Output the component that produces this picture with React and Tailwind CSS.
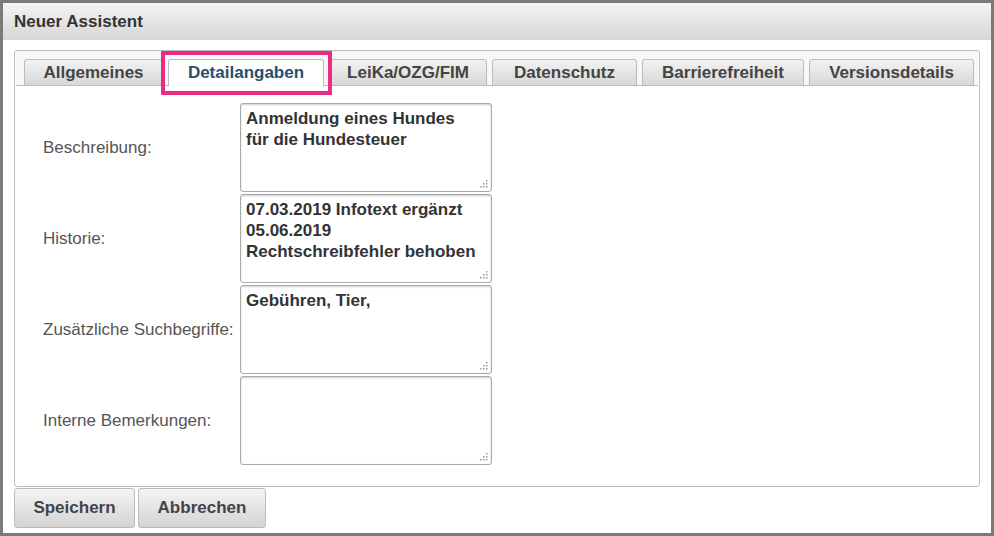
export default function App() {
  const tabs = [
    ["Allgemeines", 139],
    ["Detailangaben", 156],
    ["LeiKa/OZG/FIM", 158],
    ["Datenschutz", 145],
    ["Barrierefreiheit", 162],
    ["Versionsdetails", 165],
  ];
  const rows = [
    ["Beschreibung:", "Anmeldung eines Hundes\nfür die Hundesteuer"],
    ["Historie:", "07.03.2019 Infotext ergänzt\n05.06.2019\nRechtschreibfehler behoben"],
    ["Zusätzliche Suchbegriffe:", "Gebühren, Tier,"],
    ["Interne Bemerkungen:", ""],
  ];
  const grip = (
    <svg width="8" height="8" className="absolute right-[3px] bottom-[3px]" viewBox="0 0 8 8">
      {[[6,0],[6,3],[3,3],[6,6],[3,6],[0,6]].map(([x,y],i)=>(<rect key={i} x={x} y={y} width="1.5" height="1.5" fill="#999"/>))}
    </svg>
  );
  return (
    <div className="w-[994px] h-[536px] bg-[#7a7a7a] p-[3px]" style={{fontFamily:'"Liberation Sans", Arial, sans-serif'}}>
      <div className="w-full h-full bg-white flex flex-col">
        <div className="h-[37px] shrink-0 bg-gradient-to-b from-[#f4f4f4] to-[#d6d6d6] flex items-center px-[11px] text-[17px] font-bold text-[#333]">Neuer Assistent</div>
        <div className="mx-[11px] mt-[10px] h-[437px] border border-[#bbb] rounded-[3px] flex flex-col relative">
          <div className="h-[35px] bg-[#f7f7f7] pt-[8px] pl-[8px] flex gap-[5px] border-b border-[#bbb] mx-[1px]">
            {tabs.map(([t,w],i)=>(
              <div key={t} style={{width:w}} className={`h-[27px] rounded-t-[3px] border border-[#bbb] flex items-center justify-center text-[17px] font-bold ${i===1?"bg-white text-[#2a4f6e] border-b-white h-[28px]":"bg-gradient-to-b from-[#f2f2f2] to-[#d8d8d8] text-[#444]"}`}>{t}</div>
            ))}
          </div>
          <div className="absolute left-[146px] top-0 w-[171px] h-[44px] border-[4px] border-[#ec2b83]"></div>
          <div className="flex flex-col gap-[2px] pt-[17px] pl-[28px]">
            {rows.map(([l,v])=>(
              <div key={l} className="flex items-center">
                <div className="w-[197px] text-[17px] text-[#555] whitespace-nowrap">{l}</div>
                <div className="relative w-[252px] h-[89px] border border-[#aaa] rounded-[3px] shadow-[inset_0_1px_2px_rgba(0,0,0,0.2)] px-[5px] py-[4px] text-[17px] font-bold text-[#333] leading-[21px] whitespace-pre-line">{v}{grip}</div>
              </div>
            ))}
          </div>
        </div>
        <div className="flex gap-[3px] mx-[11px] mt-[1px]">
          {[["Speichern",121],["Abbrechen",128]].map(([t,w])=>(
            <div key={t} style={{width:w}} className="h-[40px] border border-[#bbb] rounded-[3px] bg-gradient-to-b from-[#f4f4f4] to-[#d4d4d4] flex items-center justify-center text-[17px] font-bold text-[#444]">{t}</div>
          ))}
        </div>
      </div>
    </div>
  );
}
